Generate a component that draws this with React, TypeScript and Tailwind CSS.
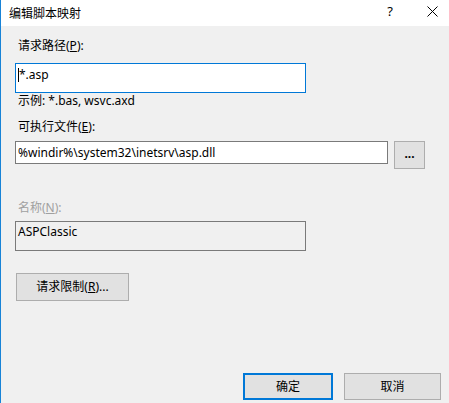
export default function App() {
  return (
    <div className="w-[449px] h-[403px] flex flex-col border-l border-[#1883d7] bg-[#f0f0f0] text-[12px] leading-[16px] text-black font-['Segoe_UI','Noto_Sans','Noto_Sans_CJK_SC',sans-serif] overflow-hidden">
      {/* Title bar */}
      <div className="h-[26px] bg-white flex items-center pl-[8px] shrink-0">
        <span className="mt-[1px]">编辑脚本映射</span>
        <span className="ml-auto mb-[4px] text-[13px]">?</span>
        <svg className="ml-[34px] mr-[11px] mb-[4px]" width="11" height="11" viewBox="0 0 11 11">
          <path d="M0.5 0.5 L10.5 10.5 M10.5 0.5 L0.5 10.5" stroke="#000" strokeWidth="1" fill="none" />
        </svg>
      </div>

      {/* Body */}
      <div className="flex-1 flex flex-col pl-[14px] pt-[12px]">
        <div className="ml-[3px]">
          请求路径(<span className="underline">P</span>):
        </div>
        <div className="relative mt-[9px] w-[291px] h-[30px] border border-[#0078d7] bg-white pl-[3px] pt-[3px]">
          <span>*.asp</span>
          <span className="absolute left-[2px] top-[4px] w-px h-[14px] bg-black" />
        </div>
        <div className="ml-[3px]">示例: *.bas, wsvc.axd</div>

        <div className="ml-[3px] mt-[10px]">
          可执行文件(<span className="underline">E</span>):
        </div>
        <div className="mt-[6px] flex items-start gap-[6px]">
          <div className="w-[373px] h-[23px] border border-[#7a7a7a] bg-white pl-[2px] flex items-center">
            %windir%\system32\inetsrv\asp.dll
          </div>
          <button className="w-[31px] h-[28px] border border-[#adadad] bg-[#e1e1e1] flex items-center justify-center font-bold leading-none pb-[2px]">
            ...
          </button>
        </div>

        <div className="ml-[3px] mt-[31px] text-[#a0a0a0]">
          名称(<span className="underline">N</span>):
        </div>
        <div className="mt-[5px] w-[291px] h-[30px] border border-[#7a7a7a] pl-[2px] pt-[2px]">
          ASPClassic
        </div>

        <button className="mt-[22px] ml-[1px] w-[113px] h-[28px] border border-[#adadad] bg-[#e1e1e1] flex items-center justify-center">
          请求限制(<span className="underline">R</span>)...
        </button>

        <div className="flex-1" />

        <div className="flex justify-end gap-[11px] pr-[8px] pb-[3px]">
          <button className="w-[90px] h-[27px] border-2 border-[#0078d7] bg-[#e1e1e1] flex items-center justify-center">
            确定
          </button>
          <button className="w-[97px] h-[27px] border border-[#adadad] bg-[#e1e1e1] flex items-center justify-center">
            取消
          </button>
        </div>
      </div>
    </div>
  );
}
